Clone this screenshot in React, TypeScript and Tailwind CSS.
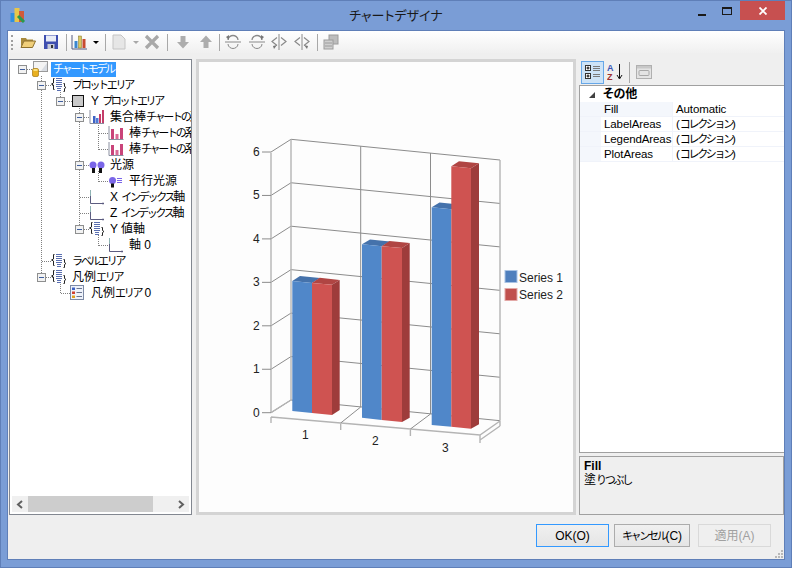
import React from 'react';

const uiFont = "font-['Liberation_Sans','Noto_Sans_CJK_JP',sans-serif]";

// kana in the original font is much narrower than its kanji, so kana runs get squeezed
const Jp: React.FC<{ text: string }> = ({ text }) => (
  <>
    {text.split(/([\u3040-\u30ff]+)/).map((part, i) =>
      i % 2 === 1 ? (
        <span key={i} className="text-[11px] tracking-[-2.3px]">
          {part}
        </span>
      ) : (
        <span key={i}>{part}</span>
      ),
    )}
  </>
);

type IconKind = 'model' | 'area' | 'plot' | 'bars' | 'pink' | 'lights' | 'light' | 'axis' | 'legend';

interface TreeRow {
  level: number;
  label: string;
  icon: IconKind;
  expander?: boolean;
  selected?: boolean;
}

const treeRows: TreeRow[] = [
  { level: 0, label: 'チャートモデル', icon: 'model', expander: true, selected: true },
  { level: 1, label: 'プロットエリア', icon: 'area', expander: true },
  { level: 2, label: 'Y プロットエリア', icon: 'plot', expander: true },
  { level: 3, label: '集合棒チャートの系列', icon: 'bars', expander: true },
  { level: 4, label: '棒チャートの系列 0', icon: 'pink' },
  { level: 4, label: '棒チャートの系列 1', icon: 'pink' },
  { level: 3, label: '光源', icon: 'lights', expander: true },
  { level: 4, label: '平行光源', icon: 'light' },
  { level: 3, label: 'X インデックス軸', icon: 'axis' },
  { level: 3, label: 'Z インデックス軸', icon: 'axis' },
  { level: 3, label: 'Y 値軸', icon: 'area', expander: true },
  { level: 4, label: '軸 0', icon: 'axis' },
  { level: 1, label: 'ラベルエリア', icon: 'area' },
  { level: 1, label: '凡例エリア', icon: 'area', expander: true },
  { level: 2, label: '凡例エリア 0', icon: 'legend' },
];

const TreeIcon: React.FC<{ kind: IconKind }> = ({ kind }) => {
  const common = { width: 16, height: 16, viewBox: '0 0 16 16', className: 'shrink-0' };
  switch (kind) {
    case 'model':
      return (
        <svg {...common}>
          <rect x="1.5" y="0.5" width="14" height="10" fill="#f4f4f4" stroke="#9a9a9a" />
          <path d="M9 10 L15 2 V10Z" fill="#d8dce2" />
          <rect x="0.5" y="7.5" width="6" height="8" rx="1.5" fill="#e8b020" stroke="#a87810" strokeWidth="0.7" />
          <rect x="1.5" y="8" width="4" height="2" fill="#f8e080" />
        </svg>
      );
    case 'area':
      return (
        <svg {...common}>
          <path d="M3.5 1.5 H2.5 V6 L0.5 7 L2.5 8 V12.5 H3.5" fill="none" stroke="#222" />
          <path d="M12.5 6.5 H13.5 V9.5 L15 10.5 L13.5 11.5 V14.5 H12.5" fill="none" stroke="#222" />
          <path d="M5 1.5H11 M5 3.5H11 M5 5.5H11 M5 7.5H11 M5 9.5H11 M6 11.5H10 M6 13.5H10" stroke="#5a6fb0" strokeWidth="1" />
        </svg>
      );
    case 'plot':
      return (
        <svg {...common}>
          <rect x="2.5" y="2.5" width="11" height="11" fill="#c9c9c9" stroke="#111" />
        </svg>
      );
    case 'bars':
      return (
        <svg {...common}>
          <path d="M1 1 V14.5 H15" fill="none" stroke="#8a8fa0" />
          <rect x="4" y="7" width="2.5" height="7" fill="#3d62c4" />
          <rect x="7" y="9" width="2.5" height="5" fill="#4f7ad8" />
          <rect x="10" y="5" width="2" height="9" fill="#c43d6a" />
          <rect x="13" y="1" width="2" height="13" fill="#c43d6a" />
        </svg>
      );
    case 'pink':
      return (
        <svg {...common}>
          <path d="M1 1 V14.5 H15.5" fill="none" stroke="#8a8fa0" />
          <rect x="3" y="4" width="3" height="10" fill="#c9447a" />
          <rect x="7.5" y="9" width="3" height="5" fill="#d86a96" />
          <rect x="12" y="3" width="3" height="11" fill="#c9447a" />
        </svg>
      );
    case 'lights':
      return (
        <svg {...common}>
          <circle cx="4" cy="8" r="3.5" fill="#7a66e8" />
          <circle cx="12" cy="8" r="3.5" fill="#7a66e8" />
          <rect x="3" y="11" width="3" height="5" fill="#111" />
          <rect x="10" y="11" width="3" height="5" fill="#111" />
        </svg>
      );
    case 'light':
      return (
        <svg {...common}>
          <circle cx="4.5" cy="7.5" r="3.5" fill="#7a66e8" />
          <rect x="3" y="10.5" width="3" height="4" fill="#111" />
          <path d="M9 5.5H14 M9 7.5H14 M9 9.5H14" stroke="#7a66e8" />
        </svg>
      );
    case 'axis':
      return (
        <svg {...common}>
          <path d="M1.5 1 V7" stroke="#8fb4b4" />
          <path d="M1.5 7 V14.5 H15" fill="none" stroke="#5c5c80" />
          <path d="M14 13.5 V15.5" stroke="#5c5c80" />
        </svg>
      );
    case 'legend':
      return (
        <svg {...common}>
          <rect x="0.5" y="0.5" width="13" height="14" fill="#eef2fa" stroke="#7d8aa5" />
          <rect x="2" y="2.5" width="3" height="2.5" fill="#3d62c4" />
          <rect x="2" y="6.5" width="3" height="2.5" fill="#d04030" />
          <rect x="2" y="10.5" width="3" height="2.5" fill="#e0a020" />
          <path d="M6.5 3.5H12 M6.5 7.5H12 M6.5 11.5H12" stroke="#6a7590" />
        </svg>
      );
  }
};

// dotted connectors of the tree control
const TreeLines: React.FC = () => (
  <svg className="absolute left-0 top-0 pointer-events-none" width="183" height="260">
    <g transform="translate(-10,-60)" stroke="#808080" strokeDasharray="1 1" fill="none" shapeRendering="crispEdges">
      <path d="M27 69.5H34" />
      <path d="M41.5 76V81 M41.5 90V273 M41.5 261.5H52 M46 85.5H53 M46 277.5H53" />
      <path d="M60.5 92V97 M65 101.5H72 M60.5 284V293.5 M60.5 293.5H72" />
      <path d="M79.5 106V225 M84 117.5H90 M84 165.5H90 M84 229.5H90 M79.5 197.5H90 M79.5 213.5H90" />
      <path d="M98.5 123V149.5 M98.5 133.5H109 M98.5 149.5H109 M98.5 171V181.5 M98.5 181.5H109 M98.5 235V245.5 M98.5 245.5H109" />
    </g>
  </svg>
);

const Expander: React.FC = () => (
  <span className="w-[9px] h-[9px] border border-[#8e8f8f] bg-[#f2f2f2] flex items-center justify-center">
    <span className="w-[5px] h-px bg-[#3f5f9f]" />
  </span>
);

const Tree: React.FC = () => (
  <div className="w-[183px] border border-[#828790] bg-white flex flex-col shrink-0">
    <div className="relative flex-1 overflow-hidden">
      <TreeLines />
      <div className="relative flex flex-col pt-px">
        {treeRows.map((row, i) => (
          <div key={i} className="flex items-center h-4 pl-[3px] whitespace-nowrap">
            {Array.from({ length: row.level }).map((_, j) => (
              <span key={j} className="w-[19px] shrink-0" />
            ))}
            <span className="w-[19px] shrink-0 flex justify-center">{row.expander && <Expander />}</span>
            <TreeIcon kind={row.icon} />
            <span
              className={`ml-[3px] px-0.5 h-[15px] leading-[15px] text-[12px] ${
                row.selected ? 'bg-[#3399ff] text-white' : 'text-black'
              }`}
            >
              <Jp text={row.label} />
            </span>
          </div>
        ))}
      </div>
    </div>
    <div className="h-[16px] mx-[2px] mb-[2px] bg-[#f0f0f0] flex items-center">
      <span className="w-[16px] flex justify-center">
        <svg width="8" height="9" viewBox="0 0 8 9"><path d="M6 1 L2 4.5 L6 8" fill="none" stroke="#606060" strokeWidth="2" /></svg>
      </span>
      <span className="w-[125px] h-full bg-[#cdcdcd]" />
      <span className="flex-1" />
      <span className="w-[16px] flex justify-center">
        <svg width="8" height="9" viewBox="0 0 8 9"><path d="M2 1 L6 4.5 L2 8" fill="none" stroke="#606060" strokeWidth="2" /></svg>
      </span>
    </div>
  </div>
);

const yTicks = [0, 1, 2, 3, 4, 5, 6];

const Chart: React.FC = () => {
  const step = 43.45;
  return (
    <svg width="374" height="450" viewBox="199 62 374 450" className="block">
      <g fill="none" stroke="#8c8c8c" strokeWidth="1">
        {yTicks.map((t) => {
          const dy = t * step;
          return (
            <path
              key={t}
              d={`M291 ${400 - dy} L500 ${420.7 - dy} M291 ${400 - dy} L271 ${412.7 - dy}`}
            />
          );
        })}
        <path d="M360.7 146.2V407 M430.5 153V414" />
      </g>
      <g fill="none" stroke="#b4b4b4" strokeWidth="1.4">
        <path d="M291 139.3V400 M500 160V420.7 M271 152.7V412.7" />
        <path d="M271 417L480 435L500 421 M271 417V423 M340.7 424V430 M410.4 430V436 M480 435V443 M500 421V426 M500 426L480 440 M271 412.7L291 400" />
      </g>
      <g stroke="#8c8c8c" fill="none">
        <path d="M340.7 423L360.7 407 M410.4 429L430.5 414" />
        {yTicks.map((t) => (
          <path key={t} d={`M262 ${412.7 - t * step}H271`} />
        ))}
      </g>

      {/* group 1 */}
      <path d="M292.3 281L300 276L320 278L312 283Z" fill="#4572ab" />
      <path d="M292.3 281L312 283V413L292.3 411Z" fill="#5087c9" />
      <path d="M312 283L319.7 277.7L339.7 280L332 284.7Z" fill="#b04543" />
      <path d="M332 284.7L339.7 280V410L332 415Z" fill="#9e3c3b" />
      <path d="M312 283L332 284.7V415L312 413Z" fill="#cf5351" />
      {/* group 2 */}
      <path d="M362 244.3L370 239.5L390 241.5L381.7 246.3Z" fill="#4572ab" />
      <path d="M362 244.3L381.7 246.3V420L362 417.7Z" fill="#5087c9" />
      <path d="M381.7 246.3L389.5 241L409.7 243L402 248Z" fill="#b04543" />
      <path d="M402 248L409.7 243V417.7L402 422Z" fill="#9e3c3b" />
      <path d="M381.7 246.3L402 248V422L381.7 420Z" fill="#cf5351" />
      {/* group 3 */}
      <path d="M431.7 207.3L439.5 202.5L459 204.5L451.3 209.3Z" fill="#4572ab" />
      <path d="M431.7 207.3L451.3 209.3V426.7L431.7 425Z" fill="#5087c9" />
      <path d="M451.3 166.3L459 161.3L479 163.3L471 168.3Z" fill="#b04543" />
      <path d="M471 168.3L479 163.3V424.3L471 428.7Z" fill="#9e3c3b" />
      <path d="M451.3 166.3L471 168.3V428.7L451.3 426.7Z" fill="#cf5351" />

      <g fontFamily="'Liberation Sans', sans-serif" fontSize="12" fill="#222">
        {yTicks.map((t) => (
          <text key={t} x="253" y={416.5 - t * step}>
            {t}
          </text>
        ))}
        <text x="302" y="438.5">1</text>
        <text x="372" y="445">2</text>
        <text x="442" y="452">3</text>
        <rect x="505" y="270.5" width="12" height="12" fill="#4f7fbd" stroke="#a9c3e4" />
        <text x="519" y="281.5">Series 1</text>
        <rect x="505" y="288.5" width="12" height="12" fill="#c0504d" stroke="#e3a9a7" />
        <text x="519" y="299">Series 2</text>
      </g>
    </svg>
  );
};

const Sep: React.FC<{ className?: string }> = ({ className }) => (
  <span className={`w-px h-[17px] bg-[#a8a8a8] shrink-0 ${className ?? ''}`} />
);

const Icon16: React.FC<{ className?: string; children: React.ReactNode }> = ({ className, children }) => (
  <svg width="16" height="16" viewBox="0 0 16 16" className={`shrink-0 ${className ?? ''}`}>
    {children}
  </svg>
);

const RotateV: React.FC<{ flip?: boolean; className?: string }> = ({ flip, className }) => (
  <Icon16 className={className}>
    <g fill="none" stroke="#8a8a8a" transform={flip ? 'matrix(-1 0 0 1 16 0)' : undefined}>
      <path d="M0 8H16" />
      <path d="M3 6C3 3 6 1.5 8 1.5S13 3 13 6" strokeWidth="1.3" />
      <path d="M3 10C3 13 6 14.5 8 14.5S13 13 13 10" />
      <path d="M1 3L4 1V6Z" fill="#777" stroke="none" />
    </g>
  </Icon16>
);

const RotateH: React.FC<{ flip?: boolean; className?: string }> = ({ flip, className }) => (
  <Icon16 className={className}>
    <g fill="none" stroke="#8a8a8a" transform={flip ? 'matrix(-1 0 0 1 16 0)' : undefined}>
      <path d="M8 0V16" />
      <path d="M6 3.5L1 7.5L6 11.5" strokeWidth="1.2" />
      <path d="M10 3.5L15 7.5L10 11.5" strokeWidth="1.2" />
      <path d="M10 11L14 12L13 15Z" fill="#777" stroke="none" />
    </g>
  </Icon16>
);

const Toolbar: React.FC = () => (
  <div className="h-[22px] flex items-center bg-gradient-to-b from-white to-[#f0f0f0] shrink-0">
    <span className="ml-[3px] w-[2px] h-[15px] border-l-2 border-dotted border-[#a0a0a0]" />
    <Icon16 className="ml-[7px]">
      <path d="M1 13V4H6L7 5.5H13V7H4L1 13Z" fill="#a88a3c" />
      <path d="M1 13.5L4 7H15.5L12.5 13.5Z" fill="#f0cf7a" stroke="#8c6f2c" />
    </Icon16>
    <Icon16 className="ml-[7px]">
      <rect x="1" y="1" width="14" height="14" fill="#3f4fb0" />
      <rect x="3" y="1.5" width="10" height="6" fill="#e8ecf6" />
      <rect x="4.5" y="10" width="7" height="5" fill="#c8ccd8" />
      <rect x="8" y="11" width="2" height="3" fill="#333" />
    </Icon16>
    <Sep className="ml-[7px]" />
    <Icon16 className="ml-[4px]">
      <path d="M1 1V15H16" fill="none" stroke="#555a80" />
      <rect x="3.5" y="7" width="3" height="7" fill="#3a86d0" />
      <rect x="7.5" y="2" width="3" height="12" fill="#d8c860" stroke="#807020" strokeWidth="0.5" />
      <rect x="11.5" y="5" width="3" height="9" fill="#c84a30" />
    </Icon16>
    <svg width="6" height="3" viewBox="0 0 6 3" className="ml-[6px]"><path d="M0 0H6L3 3Z" fill="#000" /></svg>
    <Sep className="ml-[6px]" />
    <Icon16 className="ml-[5px]">
      <path d="M2 1H10L14 5V15H2Z" fill="#e6e6e6" stroke="#c4c4c4" />
    </Icon16>
    <svg width="6" height="3" viewBox="0 0 6 3" className="ml-[6px]"><path d="M0 0H6L3 3Z" fill="#a8a8a8" /></svg>
    <Icon16 className="ml-[5px]">
      <path d="M2 2L14 14 M14 2L2 14" stroke="#a8a8a8" strokeWidth="3.2" />
    </Icon16>
    <Sep className="ml-[7px]" />
    <Icon16 className="ml-[7px]">
      <path d="M5.5 2H10.5V8H14L8 14.5L2 8H5.5Z" fill="#adadad" />
    </Icon16>
    <Icon16 className="ml-[7px]">
      <path d="M5.5 14H10.5V8H14L8 1.5L2 8H5.5Z" fill="#adadad" />
    </Icon16>
    <Sep className="ml-[5px]" />
    <RotateV className="ml-[5px]" />
    <RotateV flip className="ml-[8px]" />
    <RotateH flip className="ml-[6px]" />
    <RotateH className="ml-[7px]" />
    <Sep className="ml-[7px]" />
    <Icon16 className="ml-[5px]">
      <rect x="6" y="1" width="9" height="9" fill="#bdbdbd" stroke="#9c9c9c" />
      <rect x="1" y="6" width="9" height="9" fill="#cfcfcf" stroke="#9c9c9c" />
      <path d="M2 9H9 M2 12H9" stroke="#9c9c9c" />
    </Icon16>
  </div>
);

interface PropRow {
  name: string;
  value: string;
  selected?: boolean;
}

const props: PropRow[] = [
  { name: 'Fill', value: 'Automatic', selected: true },
  { name: 'LabelAreas', value: '(コレクション)' },
  { name: 'LegendAreas', value: '(コレクション)' },
  { name: 'PlotAreas', value: '(コレクション)' },
];

const PropertyPanel: React.FC = () => (
  <div className="w-[205px] h-full flex flex-col shrink-0">
    <div className="h-[26px] flex items-center pl-[2px]">
      <span className="w-[23px] h-[23px] bg-[#cde3f7] border border-[#66a7e8] flex items-center justify-center">
        <Icon16>
          <rect x="0.5" y="1.5" width="5" height="5" fill="#fff" stroke="#333" />
          <path d="M1.5 4H4.5 M3 2.5V5.5" stroke="#000" />
          <rect x="0.5" y="9.5" width="5" height="5" fill="#fff" stroke="#333" />
          <path d="M1.5 12H4.5 M3 10.5V13.5" stroke="#000" />
          <path d="M8 2.5H15 M8 4.5H15 M8 6.5H15 M8 10.5H15 M8 12.5H15" stroke="#7a7a7a" />
        </Icon16>
      </span>
      <svg width="16" height="18" viewBox="0 0 16 18" className="ml-[3px]">
        <text x="0" y="8" fontSize="9" fontWeight="bold" fill="#3a55b5" fontFamily="'Liberation Sans', sans-serif">A</text>
        <text x="0" y="17" fontSize="9" fontWeight="bold" fill="#a03030" fontFamily="'Liberation Sans', sans-serif">Z</text>
        <path d="M12.5 1V15 M10 12L12.5 16L15 12" stroke="#111" fill="none" />
      </svg>
      <span className="ml-[6px] w-px h-[21px] bg-[#a8a8a8]" />
      <Icon16 className="ml-[6px]">
        <rect x="0.5" y="1.5" width="15" height="13" fill="#e4e4e4" stroke="#b0b0b0" />
        <rect x="1" y="2" width="14" height="2.5" fill="#c8c8c8" />
        <rect x="3" y="6.5" width="10" height="5" rx="1" fill="none" stroke="#a8a8a8" />
      </Icon16>
    </div>
    <div className="h-[368px] pt-px border border-[#a0a0a0] border-r-0 bg-white text-[11.5px] leading-[15px] tracking-[-0.1px]">
      <div className="h-[15px] flex items-center bg-white">
        <svg width="6" height="6" viewBox="0 0 6 6" className="ml-[9px]"><path d="M6 0V6H0Z" fill="#404040" /></svg>
        <span className="ml-[8px] font-bold text-[12px] text-black [font-feature-settings:'palt']">その他</span>
      </div>
      {props.map((p) => (
        <div key={p.name} className="h-[15px] flex border-b border-[#f0f3fa]">
          <span className="w-[21px] bg-[#f4f7fc] shrink-0" />
          <span
            className={`w-[72px] shrink-0 pl-[3px] text-black border-r border-[#f0f3fa] whitespace-nowrap ${
              p.selected ? 'bg-[#f4f7fc]' : ''
            }`}
          >
            {p.name}
          </span>
          <span className="pl-[3px] text-black whitespace-nowrap">
            <Jp text={p.value} />
          </span>
        </div>
      ))}
    </div>
    <div className="mt-[3px] flex-1 border border-[#a0a0a0] bg-[#efefef] pl-[4px] pt-[2px] text-[12px] leading-[14px] text-black">
      <div className="font-bold">Fill</div>
      <div>
        <Jp text="塗りつぶし" />
      </div>
    </div>
  </div>
);

const WinButton: React.FC<{ label: string; className: string }> = ({ label, className }) => (
  <span className={`h-[23px] flex items-center justify-center border text-[12px] ${className}`}>
    <span>
      <Jp text={label} />
    </span>
  </span>
);

export default function App() {
  return (
    <div className={`w-[792px] h-[568px] flex flex-col bg-[#7a9dd6] border border-[#5f7fb8] overflow-hidden ${uiFont}`}>
      <div className="relative h-[29px] shrink-0 flex items-center justify-center text-[13px] text-[#1a1a1a]">
        <svg width="16" height="16" viewBox="0 0 16 16" className="absolute left-[9px] top-[6px]">
          <rect x="0.5" y="6" width="5" height="9" fill="#2f8fe0" />
          <rect x="4.5" y="1" width="5" height="14" fill="#e8c64a" />
          <rect x="9" y="4" width="5" height="11" fill="#d05a3a" />
          <path d="M8 9L14 15" stroke="#2a9a4a" strokeWidth="3" />
        </svg>
        <span className="[font-feature-settings:'palt']">チャートデザイナ</span>
        <div className="absolute right-[6px] top-0 flex items-start">
          <span className="w-[25px] h-[19px] flex items-end justify-center pb-[4px]">
            <span className="w-2 h-[2px] bg-[#1a1a1a]" />
          </span>
          <span className="w-[26px] h-[19px] flex items-center justify-center">
            <span className="w-[10px] h-[8px] border border-t-2 border-[#1a1a1a]" />
          </span>
          <span className="w-[45px] h-[19px] bg-[#c75050] flex items-center justify-center">
            <svg width="8" height="8" viewBox="0 0 8 8"><path d="M0.5 0.5L7.5 7.5 M7.5 0.5L0.5 7.5" stroke="#fff" strokeWidth="1.8" /></svg>
          </span>
        </div>
      </div>
      <div className="mx-[6px] flex-1 mb-[7px] border border-[#5f7fb8] bg-[#efefef] flex flex-col overflow-hidden">
        <Toolbar />
        <div className="h-[456px] mt-[6px] flex pl-px">
          <Tree />
          <div className="ml-[4px] w-[380px] border-[3px] border-[#d4d4d4] bg-[#fdfdfd] overflow-hidden shrink-0">
            <Chart />
          </div>
          <div className="ml-[3px]">
            <PropertyPanel />
          </div>
        </div>
        <div className="relative flex-1 flex justify-end items-start pt-[9px] pr-[13px]">
          <WinButton label="OK(O)" className="w-[73px] border-[#3399ff] bg-gradient-to-b from-[#f0f0f0] to-[#e5e5e5] text-black" />
          <WinButton label="キャンセル(C)" className="ml-[5px] w-[76px] border-[#acacac] bg-gradient-to-b from-[#f0f0f0] to-[#e5e5e5] text-black" />
          <WinButton label="適用(A)" className="ml-[8px] w-[73px] border-[#d9d9d9] bg-[#efefef] text-[#a0a0a0]" />
          <svg width="8" height="8" viewBox="0 0 8 8" className="absolute right-[1px] bottom-[1px]">
            <path d="M6 0h2v2h-2z M3 3h2v2h-2z M6 3h2v2h-2z M0 6h2v2h-2z M3 6h2v2h-2z M6 6h2v2h-2z" fill="#b8b8b8" />
          </svg>
        </div>
      </div>
    </div>
  );
}
